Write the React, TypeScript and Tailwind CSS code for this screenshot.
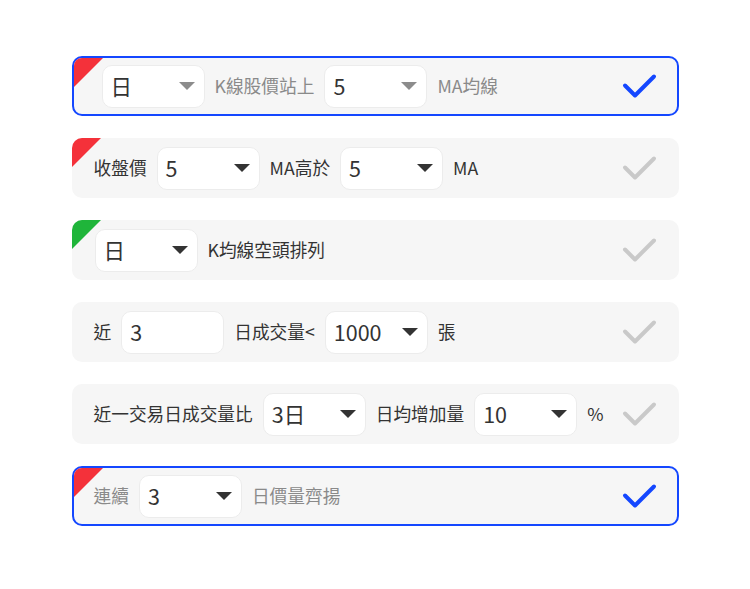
import React from "react";

const FONT = { fontFamily: '"Noto Sans CJK TC", "Noto Sans", sans-serif' };

function Caret({ muted }: { muted?: boolean }) {
  return (
    <svg width="16" height="8" viewBox="0 0 16 8" className="shrink-0">
      <polygon points="0,0 16,0 8,8" fill={muted ? "#8c8c8c" : "#333333"} />
    </svg>
  );
}

function Select({ value, muted, caret = true }: { value: string; muted?: boolean; caret?: boolean }) {
  return (
    <div className="flex h-[43px] w-[103px] shrink-0 items-center justify-between rounded-[10px] border border-[#ececec] bg-white pl-[8px] pr-[9px] text-[21.5px] text-[#333333]">
      <span className="leading-none">{value}</span>
      {caret && <Caret muted={muted} />}
    </div>
  );
}

function Check({ active }: { active?: boolean }) {
  return (
    <svg width="36" height="26" viewBox="0 0 36 26" className="ml-auto shrink-0">
      <polyline
        points="3,12.5 13,22.5 32,3.5"
        fill="none"
        stroke={active ? "#1447ff" : "#c9c9c9"}
        strokeWidth="4"
        strokeLinecap="round"
        strokeLinejoin="round"
      />
    </svg>
  );
}

function Corner({ color }: { color: string }) {
  return (
    <svg width="29" height="29" viewBox="0 0 29 29" className="absolute left-0 top-0">
      <polygon points="0,0 29,0 0,29" fill={color} />
    </svg>
  );
}

function Label({ children, muted }: { children: React.ReactNode; muted?: boolean }) {
  return (
    <span className={`shrink-0 whitespace-nowrap text-[17.7px] leading-none ${muted ? "text-[#8a8a8a]" : "text-[#333333]"}`}>
      {children}
    </span>
  );
}

export default function App() {
  return (
    <div className="min-h-[589px] w-full bg-white" style={FONT}>
      <div className="mx-auto flex w-[607px] flex-col gap-[22px] pt-[56px]">
        {/* Row 1 */}
        <div className="relative flex h-[60px] items-center gap-[10px] overflow-hidden rounded-[10px] border-2 border-[#1447ff] bg-[#f6f6f6] pl-[28px] pr-[19px]">
          <Corner color="#f4313a" />
          <Select value="日" muted />
          <Label muted>K線股價站上</Label>
          <Select value="5" muted />
          <Label muted>MA均線</Label>
          <Check active />
        </div>

        {/* Row 2 */}
        <div className="relative flex h-[60px] items-center gap-[10px] overflow-hidden rounded-[10px] bg-[#f6f6f6] pl-[22px] pr-[21px]">
          <Corner color="#f4313a" />
          <Label>收盤價</Label>
          <Select value="5" />
          <Label>MA高於</Label>
          <Select value="5" />
          <Label>MA</Label>
          <Check />
        </div>

        {/* Row 3 */}
        <div className="relative flex h-[60px] items-center gap-[10px] overflow-hidden rounded-[10px] bg-[#f6f6f6] pl-[23px] pr-[21px]">
          <Corner color="#1fb53a" />
          <Select value="日" />
          <Label>K均線空頭排列</Label>
          <Check />
        </div>

        {/* Row 4 */}
        <div className="relative flex h-[60px] items-center gap-[10px] overflow-hidden rounded-[10px] bg-[#f6f6f6] pl-[22px] pr-[21px]">
          <Label>近</Label>
          <Select value="3" caret={false} />
          <Label>日成交量&lt;</Label>
          <Select value="1000" />
          <Label>張</Label>
          <Check />
        </div>

        {/* Row 5 */}
        <div className="relative flex h-[60px] items-center gap-[10px] overflow-hidden rounded-[10px] bg-[#f6f6f6] pl-[22px] pr-[21px]">
          <Label>近一交易日成交量比</Label>
          <Select value="3日" />
          <Label>日均增加量</Label>
          <Select value="10" />
          <Label>%</Label>
          <Check />
        </div>

        {/* Row 6 */}
        <div className="relative flex h-[60px] items-center gap-[10px] overflow-hidden rounded-[10px] border-2 border-[#1447ff] bg-[#f6f6f6] pl-[20px] pr-[19px]">
          <Corner color="#f4313a" />
          <Label muted>連續</Label>
          <Select value="3" />
          <Label muted>日價量齊揚</Label>
          <Check active />
        </div>
      </div>
    </div>
  );
}
